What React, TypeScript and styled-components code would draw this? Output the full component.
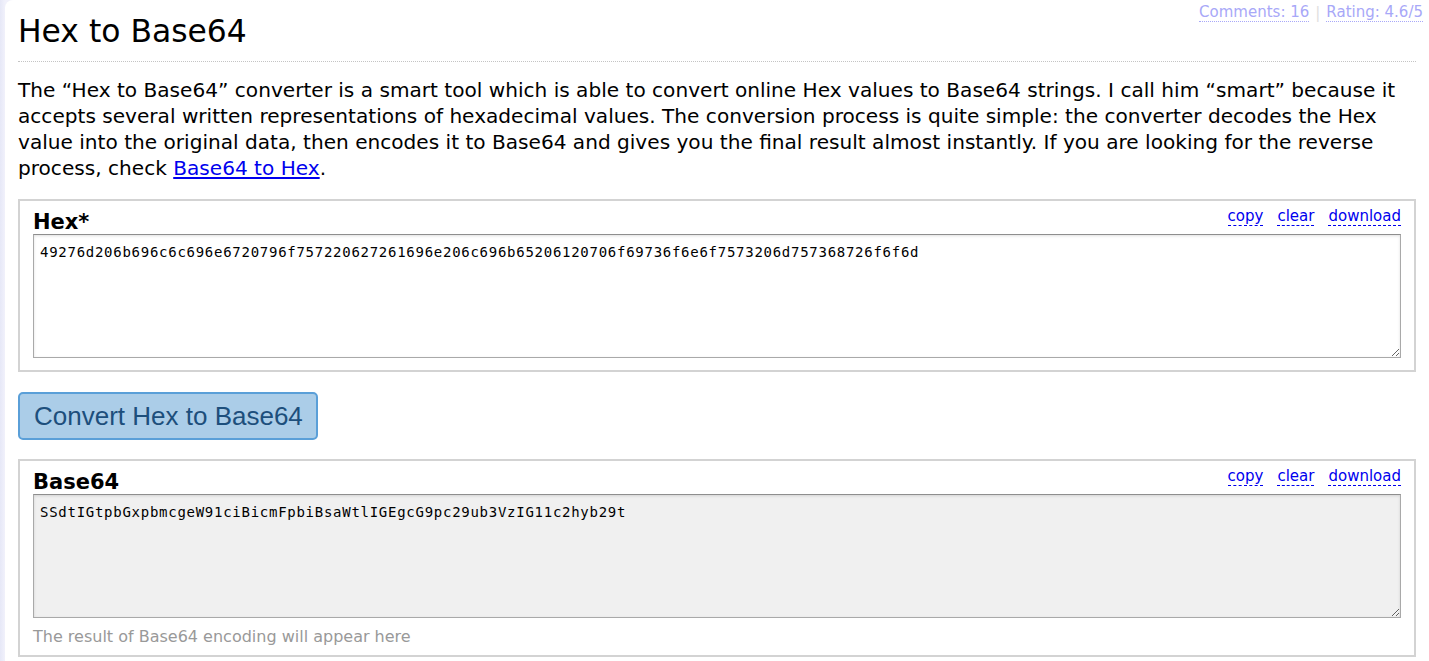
import React from "react";
import styled, { createGlobalStyle } from "styled-components";

const Global = createGlobalStyle`
  html, body { margin: 0; padding: 0; background: #eceefa; }
  body { font-family: "DejaVu Sans", Verdana, sans-serif; color: #000; }
`;

const Page = styled.div`
  display: flex;
  min-height: 661px;
  background: linear-gradient(90deg, #e6e8f7 0px, #f1f1fb 5px);
`;

const Main = styled.main`
  flex: 1;
  margin-left: 5px;
  background: #fff;
  border-top-left-radius: 8px;
  padding: 0 13px 0 13px;
  position: relative;
`;

const Meta = styled.div`
  position: absolute;
  top: 4px;
  right: 6px;
  font-size: 15px;
  display: flex;
  gap: 6px;
  align-items: center;
`;

const MetaLink = styled.a`
  color: #a8a8f8;
  text-decoration: none;
  border-bottom: 1px dotted #a8a8f8;
  line-height: 17px;
`;

const Sep = styled.span`
  color: #e0e0e0;
`;

const Title = styled.h1`
  margin: 0;
  padding-top: 13px;
  padding-bottom: 12px;
  font-weight: normal;
  font-size: 31.4px;
  line-height: 36px;
  border-bottom: 1px dotted #c4c4c4;
`;

const Intro = styled.p`
  margin: 15px 0 18px;
  font-size: 20.1px;
  line-height: 26px;
  a { color: #00e; }
`;

const Box = styled.section`
  border: 2px solid #d3d3d3;
  padding: 6px 13px 12px 13px;
`;

const BoxHead = styled.div`
  display: flex;
  justify-content: space-between;
  align-items: flex-end;
  height: 27px;
`;

const Label = styled.label`
  font-weight: bold;
  font-size: 21px;
  line-height: 24px;
`;

const Actions = styled.div`
  display: flex;
  gap: 14px;
  font-size: 15px;
  padding-bottom: 8px;
`;

const Action = styled.a`
  color: #00e;
  text-decoration: none;
  border-bottom: 1px dashed #00e;
  line-height: 17px;
  cursor: pointer;
`;

const Area = styled.textarea<{ $readOnly?: boolean }>`
  display: block;
  width: 100%;
  box-sizing: border-box;
  height: 124px;
  resize: vertical;
  border: 1px solid #a9a9a9;
  border-top-color: #8e8e8e;
  box-shadow: inset 0 1px 3px rgba(0,0,0,0.12);
  background: ${(p) => (p.$readOnly ? "#f0f0f0" : "#fff")};
  padding: 8px 6px;
  font-family: "DejaVu Sans Mono", monospace;
  font-size: 14px;
  letter-spacing: 0.73px;
  line-height: 18px;
  color: #000;
  outline: none;
`;

const ConvertButton = styled.button`
  display: block;
  margin: 20px 0 19px;
  height: 48px;
  padding: 0 13px 0 14px;
  background: #abcde8;
  border: 2px solid #5a9fd8;
  border-radius: 5px;
  color: #1d4f7c;
  font-family: "Liberation Sans", Arial, sans-serif;
  font-size: 26px;
  cursor: pointer;
`;

const Hint = styled.div`
  margin-top: 10px;
  margin-bottom: -3px;
  font-size: 16px;
  color: #999;
  line-height: 18px;
`;

const ActionBar = () => (
  <Actions>
    <Action>copy</Action>
    <Action>clear</Action>
    <Action>download</Action>
  </Actions>
);

export default function App() {
  return (
    <>
      <Global />
      <Page>
        <Main>
          <Meta>
            <MetaLink href="#">Comments: 16</MetaLink>
            <Sep>|</Sep>
            <MetaLink href="#">Rating: 4.6/5</MetaLink>
          </Meta>
          <Title>Hex to Base64</Title>
          <Intro>
            The “Hex to Base64” converter is a smart tool which is able to convert online Hex values to Base64 strings. I call him “smart” because it accepts several written representations of hexadecimal values. The conversion process is quite simple: the converter decodes the Hex value into the original data, then encodes it to Base64 and gives you the final result almost instantly. If you are looking for the reverse process, check <a href="#">Base64 to Hex</a>.
          </Intro>
          <Box>
            <BoxHead>
              <Label>Hex*</Label>
              <ActionBar />
            </BoxHead>
            <Area defaultValue="49276d206b696c6c696e6720796f757220627261696e206c696b65206120706f69736f6e6f7573206d757368726f6f6d" />
          </Box>
          <ConvertButton>Convert Hex to Base64</ConvertButton>
          <Box>
            <BoxHead>
              <Label>Base64</Label>
              <ActionBar />
            </BoxHead>
            <Area $readOnly readOnly defaultValue="SSdtIGtpbGxpbmcgeW91ciBicmFpbiBsaWtlIGEgcG9pc29ub3VzIG11c2hyb29t" />
            <Hint>The result of Base64 encoding will appear here</Hint>
          </Box>
        </Main>
      </Page>
    </>
  );
}
